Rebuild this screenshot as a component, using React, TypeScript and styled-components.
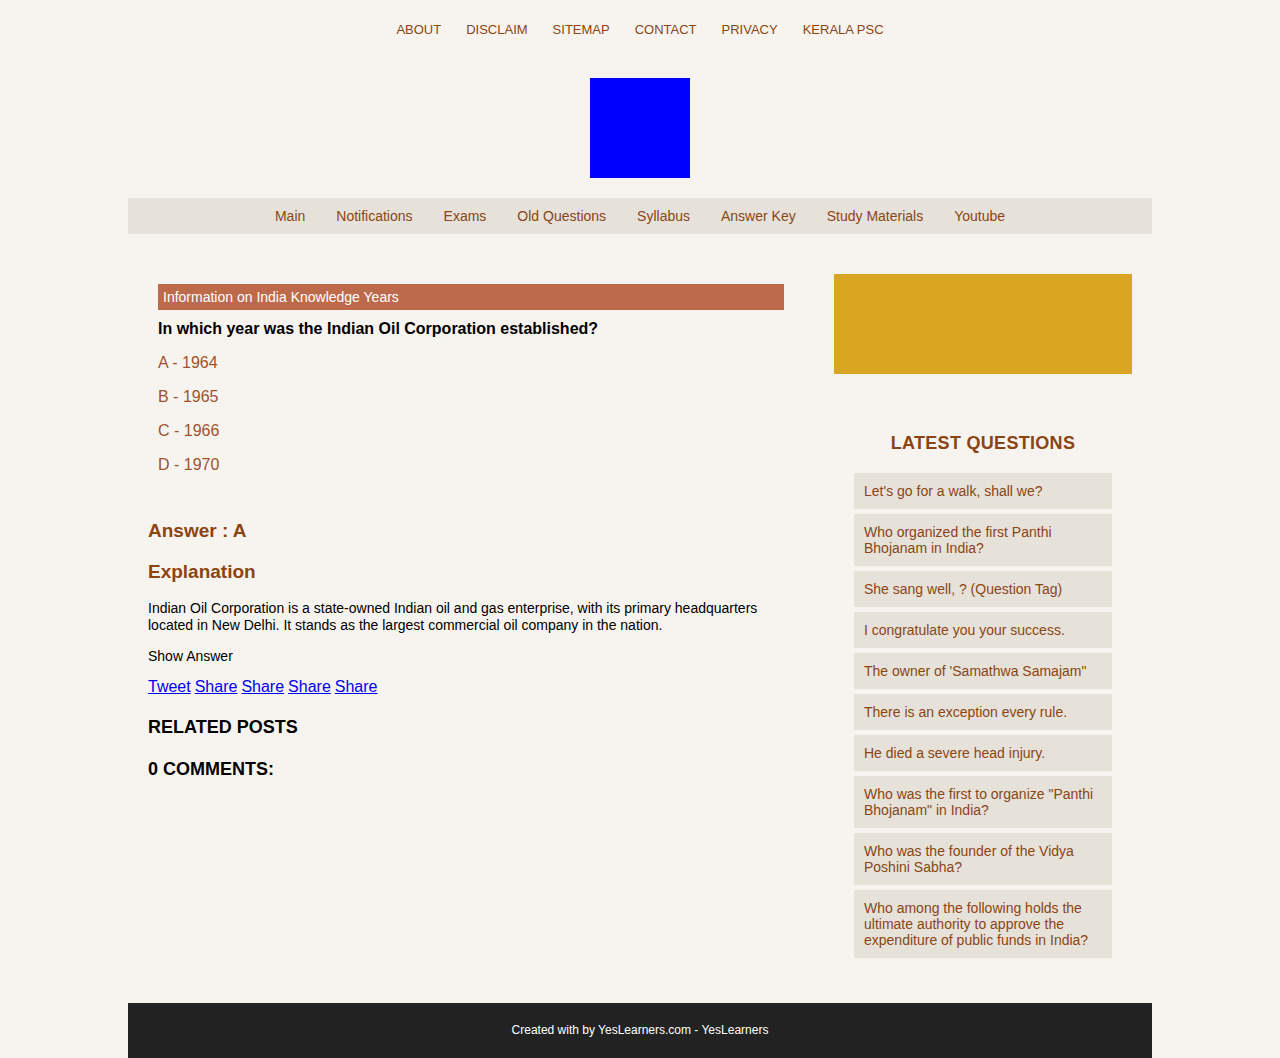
import React from "react";
import styled, { createGlobalStyle } from "styled-components";

const Global = createGlobalStyle`
  html, body { margin: 0; padding: 0; background: #f7f4ef; }
  body { font-family: "Liberation Sans", Arial, sans-serif; color: #000; }
  * { box-sizing: border-box; }
`;

const Page = styled.div`
  width: 1024px;
  margin: 0 auto;
`;

const TopNav = styled.nav`
  display: flex;
  justify-content: center;
  padding-top: 22px;
  height: 38px;
`;

const TopLink = styled.a`
  font-size: 13px;
  line-height: 15px;
  color: #8b4513;
  text-transform: uppercase;
  text-decoration: none;
  padding: 0 12.5px;
`;

const LogoRow = styled.div`
  display: flex;
  justify-content: center;
  padding: 40px 0 20px;
`;

const Logo = styled.div`
  width: 100px;
  height: 100px;
  background: #0000ff;
`;

const MainNav = styled.nav`
  height: 36px;
  background: #e6e2da;
  display: flex;
  justify-content: center;
  align-items: center;
`;

const NavLink = styled.a`
  font-size: 14px;
  color: #8b4513;
  text-decoration: none;
  padding: 0 15.5px;
`;

const Content = styled.div`
  display: grid;
  grid-template-columns: 646px 298px;
  column-gap: 40px;
  padding: 40px 20px 45px;
  align-items: start;
`;

const Post = styled.article``;

const QuizBox = styled.div`
  padding: 10px;
`;

const QuizHeader = styled.div`
  background: #bc6a4a;
  color: #fff;
  font-size: 14px;
  height: 26px;
  line-height: 26px;
  padding: 0 5px;
`;

const Question = styled.p`
  font-size: 16px;
  font-weight: bold;
  margin: 9px 0 0;
  line-height: 19px;
`;

const Option = styled.p`
  font-size: 16px;
  color: #a0522d;
  margin: 15px 0 0;
  line-height: 19px;
`;

const Heading = styled.h3<{ $top: number }>`
  font-size: 19px;
  font-weight: bold;
  color: #8b4513;
  margin: ${(p) => p.$top}px 0 0;
  line-height: 22px;
`;

const Text = styled.p<{ $top: number }>`
  font-size: 14px;
  line-height: 17px;
  margin: ${(p) => p.$top}px 0 0;
`;

const Shares = styled.div`
  margin-top: 12px;
  font-size: 16px;
  line-height: 19px;
  display: flex;
  gap: 4px;
`;

const ShareLink = styled.a`
  color: #0000ee;
  text-decoration: underline;
`;

const BlockTitle = styled.h4<{ $top: number }>`
  font-size: 18px;
  font-weight: bold;
  text-transform: uppercase;
  margin: ${(p) => p.$top}px 0 0;
  line-height: 21px;
`;

const Sidebar = styled.aside``;

const AdBox = styled.div`
  height: 100px;
  background: #daa520;
`;

const Widget = styled.div`
  padding: 58px 20px 0;
`;

const WidgetTitle = styled.h2`
  font-size: 18px;
  font-weight: bold;
  color: #8b4513;
  text-align: center;
  text-transform: uppercase;
  letter-spacing: 0.3px;
  margin: 0 0 19px;
  line-height: 22px;
`;

const QList = styled.ul`
  list-style: none;
  margin: 0;
  padding: 0;
  display: flex;
  flex-direction: column;
  gap: 5px;
`;

const QItem = styled.li`
  background: #e6e2da;
  padding: 10px;
  font-size: 14px;
  line-height: 16px;
  color: #8b4513;
`;

const Footer = styled.footer`
  background: #222;
  color: #fff;
  text-align: center;
  font-size: 12px;
  line-height: 14px;
  padding: 20px 0 21px;
`;

const topLinks = ["About", "Disclaim", "Sitemap", "Contact", "Privacy", "Kerala PSC"];
const navLinks = ["Main", "Notifications", "Exams", "Old Questions", "Syllabus", "Answer Key", "Study Materials", "Youtube"];
const options = ["A - 1964", "B - 1965", "C - 1966", "D - 1970"];
const questions = [
  "Let's go for a walk, shall we?",
  "Who organized the first Panthi Bhojanam in India?",
  "She sang well, ? (Question Tag)",
  "I congratulate you your success.",
  "The owner of 'Samathwa Samajam\"",
  "There is an exception every rule.",
  "He died a severe head injury.",
  "Who was the first to organize \"Panthi Bhojanam\" in India?",
  "Who was the founder of the Vidya Poshini Sabha?",
  "Who among the following holds the ultimate authority to approve the expenditure of public funds in India?",
];

export default function App() {
  return (
    <>
      <Global />
      <Page>
        <TopNav>
          {topLinks.map((l) => (
            <TopLink key={l} href="#">{l}</TopLink>
          ))}
        </TopNav>
        <LogoRow>
          <Logo />
        </LogoRow>
        <MainNav>
          {navLinks.map((l) => (
            <NavLink key={l} href="#">{l}</NavLink>
          ))}
        </MainNav>
        <Content>
          <Post>
            <QuizBox>
              <QuizHeader>Information on India Knowledge Years</QuizHeader>
              <Question>In which year was the Indian Oil Corporation established?</Question>
              {options.map((o) => (
                <Option key={o}>{o}</Option>
              ))}
            </QuizBox>
            <Heading $top={36}>Answer : A</Heading>
            <Heading $top={19}>Explanation</Heading>
            <Text $top={17}>
              Indian Oil Corporation is a state-owned Indian oil and gas enterprise, with its primary headquarters
              located in New Delhi. It stands as the largest commercial oil company in the nation.
            </Text>
            <Text $top={14}>Show Answer</Text>
            <Shares>
              <ShareLink href="#">Tweet</ShareLink>
              <ShareLink href="#">Share</ShareLink>
              <ShareLink href="#">Share</ShareLink>
              <ShareLink href="#">Share</ShareLink>
              <ShareLink href="#">Share</ShareLink>
            </Shares>
            <BlockTitle $top={21}>Related Posts</BlockTitle>
            <BlockTitle $top={21}>0 Comments:</BlockTitle>
          </Post>
          <Sidebar>
            <AdBox />
            <Widget>
              <WidgetTitle>Latest Questions</WidgetTitle>
              <QList>
                {questions.map((q, i) => (
                  <QItem key={i}>{q}</QItem>
                ))}
              </QList>
            </Widget>
          </Sidebar>
        </Content>
        <Footer>Created with by YesLearners.com - YesLearners</Footer>
      </Page>
    </>
  );
}
